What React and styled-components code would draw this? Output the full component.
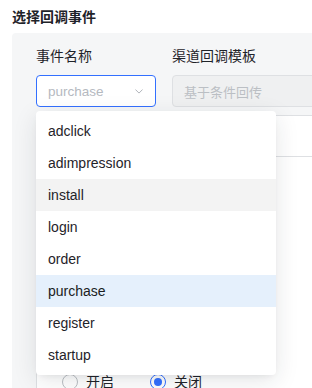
import React from "react";
import styled, { createGlobalStyle } from "styled-components";

const GlobalStyle = createGlobalStyle`
  html, body { margin: 0; padding: 0; background: #ffffff; }
  body {
    font-family: "Liberation Sans", "Noto Sans CJK SC", sans-serif;
    color: #1f2329;
    overflow: hidden;
  }
  * { box-sizing: border-box; }
`;

const Page = styled.div`
  width: 312px;
  height: 388px;
  overflow: hidden;
  padding: 6px 0 0 12px;
`;

const Title = styled.div`
  font-size: 14px;
  line-height: 22px;
  font-weight: 700;
  color: #1f2329;
`;

const Panel = styled.div`
  margin-top: 5px;
  width: 420px;
  height: 400px;
  background: #f5f6f7;
  border-radius: 4px 0 0 0;
  padding: 12px 0 0 24px;
`;

const FieldsRow = styled.div`
  display: flex;
  gap: 16px;
`;

const Field = styled.div`
  display: flex;
  flex-direction: column;
  gap: 8px;
`;

const Label = styled.div`
  font-size: 14px;
  line-height: 22px;
  color: #1f2329;
`;

const SelectWrap = styled.div`
  position: relative;
  width: 120px;
`;

const SelectBox = styled.div`
  height: 32px;
  border: 1px solid #3370ff;
  border-radius: 4px;
  background: #fff;
  display: flex;
  align-items: center;
  justify-content: space-between;
  padding: 0 12px 0 11px;
`;

const Placeholder = styled.span`
  font-size: 13.5px;
  color: #b5b9bf;
`;

const Menu = styled.ul`
  position: absolute;
  top: 36px;
  left: 0;
  width: 240px;
  margin: 0;
  padding: 4px 0;
  list-style: none;
  background: #fff;
  border-radius: 4px;
  box-shadow: 0 6px 24px 0 rgba(31, 35, 41, 0.11), 0 3px 8px -4px rgba(31, 35, 41, 0.12);
  z-index: 10;
`;

const MenuItem = styled.li`
  height: 32px;
  line-height: 32px;
  padding-left: 12px;
  font-size: 14px;
  color: ${(p) => (p.$selected ? "#1a1d22" : "#1f2329")};
  background: ${(p) => (p.$selected ? "#e5f0fc" : p.$hover ? "#f3f3f3" : "transparent")};
`;

const DisabledInput = styled.div`
  width: 220px;
  height: 32px;
  border: 1px solid #dee0e3;
  border-radius: 4px;
  background: #eff0f1;
  display: flex;
  align-items: center;
  padding-left: 11px;
  font-size: 13px;
  color: #bbbfc4;
`;

const Card = styled.div`
  margin-top: 8px;
  height: 300px;
  background: #fff;
  border: 1px solid #dee0e3;
  border-right: none;
  border-radius: 4px 0 0 0;
`;

const CardHeader = styled.div`
  height: 41px;
  border-bottom: 1px solid #dee0e3;
`;

const CardBody = styled.div`
  padding: 214px 0 0 25px;
`;

const RadioGroup = styled.div`
  display: flex;
  align-items: center;
  gap: 36px;
`;

const RadioOption = styled.label`
  display: flex;
  align-items: center;
  gap: 8px;
  font-size: 14px;
  line-height: 22px;
  color: #1f2329;
`;

const RadioCircle = styled.span`
  width: 16px;
  height: 16px;
  border-radius: 50%;
  border: ${(p) => (p.$checked ? "1.5px solid #3370ff" : "1px solid #bbbfc4")};
  background: #fff;
  display: flex;
  align-items: center;
  justify-content: center;
  &::after {
    content: "";
    display: ${(p) => (p.$checked ? "block" : "none")};
    width: 8px;
    height: 8px;
    border-radius: 50%;
    background: #3370ff;
  }
`;

const Chevron = () => (
  <svg width="8" height="5" viewBox="0 0 8 5" fill="none">
    <path d="M0.7 0.8l3.3 3.3 3.3-3.3" stroke="#b0b4ba" strokeWidth="1" strokeLinecap="round" strokeLinejoin="round" />
  </svg>
);

const items = ["adclick", "adimpression", "install", "login", "order", "purchase", "register", "startup"];

export default function App() {
  return (
    <>
      <GlobalStyle />
      <Page>
        <Title>选择回调事件</Title>
        <Panel>
          <FieldsRow>
            <Field>
              <Label>事件名称</Label>
              <SelectWrap>
                <SelectBox>
                  <Placeholder>purchase</Placeholder>
                  <Chevron />
                </SelectBox>
                <Menu>
                  {items.map((it) => (
                    <MenuItem key={it} $selected={it === "purchase"} $hover={it === "install"}>
                      {it}
                    </MenuItem>
                  ))}
                </Menu>
              </SelectWrap>
            </Field>
            <Field>
              <Label>渠道回调模板</Label>
              <DisabledInput>基于条件回传</DisabledInput>
            </Field>
          </FieldsRow>
          <Card>
            <CardHeader />
            <CardBody>
              <RadioGroup>
                <RadioOption>
                  <RadioCircle />
                  开启
                </RadioOption>
                <RadioOption>
                  <RadioCircle $checked />
                  关闭
                </RadioOption>
              </RadioGroup>
            </CardBody>
          </Card>
        </Panel>
      </Page>
    </>
  );
}
